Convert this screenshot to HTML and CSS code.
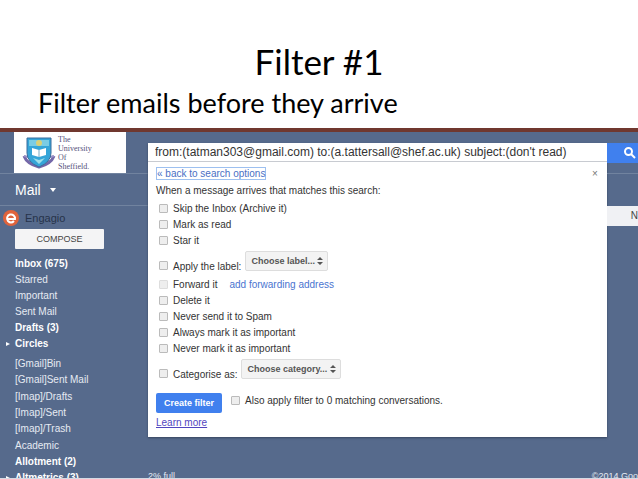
FILE: index.html
```html
<!DOCTYPE html>
<html lang="en">
<head>
    <meta charset="UTF-8">
    <meta name="viewport" content="width=device-width, initial-scale=1.0">
    <title>Filter #1</title>
    <link rel="stylesheet" href="styles.css">
</head>
<body>
    <header class="slide-header">
        <h1>Filter #1</h1>
        <p>Filter emails before they arrive</p>
    </header>
    <div class="mail">
        <aside class="sidebar">
            <div class="logo">
                <svg width="34" height="34" viewBox="0 0 34 34">
                    <path d="M2 20 Q5 28 17 31 Q29 28 32 20" fill="none" stroke="#7468a8" stroke-width="3"/>
                    <path d="M2 20l4 1M32 20l-4 1" stroke="#9a8fc4" stroke-width="2"/>
                    <path d="M5 2h24v15q0 9-12 14Q5 26 5 17z" fill="#35a5d8" stroke="#3a6d9c" stroke-width="1"/>
                    <path d="M7 4h20v6H7z" fill="#79cce4"/>
                    <circle cx="17" cy="7" r="3" fill="#d8d077"/>
                    <path d="M10 12l7 2 7-2v7l-7 2-7-2z" fill="#fff"/>
                    <path d="M17 14v7" stroke="#79a9c4"/>
                    <path d="M11 22l6 2 6-2-6 6z" fill="#9fe0ea"/>
                </svg>
                <span>The<br>University<br>Of<br>Sheffield.</span>
            </div>
            <button class="mail-menu">Mail
                <svg width="6" height="4" viewBox="0 0 6 4"><path d="M0 0h6L3 4z" fill="#fff"/></svg>
            </button>
            <div class="engagio">
                <svg width="16" height="16" viewBox="0 0 16 16">
                    <circle cx="8" cy="8" r="8" fill="#e0633c"/>
                    <path d="M5 9h7a4 4 0 1 0-7 2q3 3 6 0" fill="none" stroke="#fff" stroke-width="2"/>
                </svg>
                <span>Engagio</span>
            </div>
            <button class="compose">COMPOSE</button>
            <nav class="folders">
                <ul>
                    <li><a href="#" class="unread">Inbox (675)</a></li>
                    <li><a href="#">Starred</a></li>
                    <li><a href="#">Important</a></li>
                    <li><a href="#">Sent Mail</a></li>
                    <li><a href="#" class="unread">Drafts (3)</a></li>
                    <li class="parent"><a href="#" class="unread">Circles</a></li>
                </ul>
                <ul class="labels">
                    <li><a href="#">[Gmail]Bin</a></li>
                    <li><a href="#">[Gmail]Sent Mail</a></li>
                </ul>
                <ul>
                    <li><a href="#">[Imap]/Drafts</a></li>
                    <li><a href="#">[Imap]/Sent</a></li>
                    <li><a href="#">[Imap]/Trash</a></li>
                </ul>
                <ul>
                    <li><a href="#">Academic</a></li>
                    <li><a href="#" class="unread">Allotment (2)</a></li>
                    <li class="parent"><a href="#" class="unread">Altmetrics (3)</a></li>
                </ul>
            </nav>
        </aside>
        <main class="content">
            <form class="panel">
                <input class="search" type="text" aria-label="Search mail" value="from:(tatman303@gmail.com) to:(a.tattersall@shef.ac.uk) subject:(don't read)">
                <div class="panel-body">
                    <div class="panel-top">
                        <a href="#" class="back">« back to search options</a>
                        <button type="button" class="close" aria-label="Close">×</button>
                    </div>
                    <p>When a message arrives that matches this search:</p>
                    <div class="option"><input type="checkbox" id="skip"><label for="skip">Skip the Inbox (Archive it)</label></div>
                    <div class="option"><input type="checkbox" id="read"><label for="read">Mark as read</label></div>
                    <div class="option"><input type="checkbox" id="star"><label for="star">Star it</label></div>
                    <div class="option with-select">
                        <input type="checkbox" id="apply"><label for="apply">Apply the label:</label>
                        <span class="select">
                            <select class="label-select" aria-label="Label"><option>Choose label...</option></select>
                            <svg width="6" height="8" viewBox="0 0 6 8"><path d="M0 3l3-3 3 3zM0 5h6L3 8z" fill="#555"/></svg>
                        </span>
                    </div>
                    <div class="option"><input type="checkbox" id="forward" disabled><label for="forward">Forward it</label><a href="#" class="forwarding">add forwarding address</a></div>
                    <div class="option"><input type="checkbox" id="delete"><label for="delete">Delete it</label></div>
                    <div class="option"><input type="checkbox" id="spam"><label for="spam">Never send it to Spam</label></div>
                    <div class="option"><input type="checkbox" id="always"><label for="always">Always mark it as important</label></div>
                    <div class="option"><input type="checkbox" id="never"><label for="never">Never mark it as important</label></div>
                    <div class="option with-select">
                        <input type="checkbox" id="category"><label for="category">Categorise as:</label>
                        <span class="select">
                            <select class="category-select" aria-label="Category"><option>Choose category...</option></select>
                            <svg width="6" height="8" viewBox="0 0 6 8"><path d="M0 3l3-3 3 3zM0 5h6L3 8z" fill="#555"/></svg>
                        </span>
                    </div>
                    <div class="actions">
                        <button type="button" class="create">Create filter</button>
                        <div class="option"><input type="checkbox" id="also"><label for="also">Also apply filter to 0 matching conversations.</label></div>
                    </div>
                    <a href="#" class="learn">Learn more</a>
                </div>
            </form>
            <footer class="mail-footer">
                <span>2% full</span>
                <span>©2014 Goo</span>
            </footer>
        </main>
        <div class="right">
            <button class="search-btn" aria-label="Search">
                <svg width="12" height="12" viewBox="0 0 12 12"><circle cx="4.500" cy="4.500" r="3.500" fill="none" stroke="#fff" stroke-width="2"/><path d="M7 7l4 4" stroke="#fff" stroke-width="2"/></svg>
            </button>
            <div class="rule"></div>
            <div class="toolbar">N</div>
        </div>
    </div>
</body>
</html>
```

FILE: styles.css
```css
* {
    box-sizing: border-box;
}
body {
    margin: 0;
    height: 100vh;
    display: flex;
    flex-direction: column;
    overflow: hidden;
    background-color: #fff;
    font-family: "Liberation Sans", Arial, sans-serif;
    font-size: 10px;
    line-height: 16px;
}
ul, p, h1 {
    margin: 0;
    padding: 0;
}
ul {
    list-style: none;
}
button {
    font-family: inherit;
    font-size: inherit;
    border: none;
    padding: 0;
}
svg {
    display: block;
    flex-shrink: 0;
}

.slide-header {
    padding: 37px 38px 7px;
    font-family: Lato, sans-serif;
    color: #000;
}
.slide-header h1 {
    font-size: 35px;
    line-height: 48px;
    font-weight: normal;
    text-align: center;
}
.slide-header p {
    font-size: 27px;
    line-height: 36px;
}

.mail {
    flex: 1;
    min-height: 0;
    display: flex;
    overflow: hidden;
    background-color: #566a8c;
    border-top: 4px solid #70382f;
    border-bottom: 1px solid #d5dae3;
}

/* left column */
.sidebar {
    width: 148px;
    flex-shrink: 0;
    color: #fff;
}
.logo {
    display: flex;
    align-items: center;
    gap: 2px;
    width: 112px;
    height: 41px;
    margin-left: 14px;
    padding-left: 8px;
    background-color: #fff;
    color: #55507a;
    font-family: "Liberation Serif", serif;
    font-size: 8px;
    line-height: 9px;
}
.mail-menu {
    display: flex;
    align-items: center;
    gap: 9px;
    width: 100%;
    height: 33px;
    padding-left: 15px;
    background: none;
    border-top: 1px solid #71839f;
    border-bottom: 1px solid #71839f;
    color: #fff;
    font-size: 14px;
}
.engagio {
    display: flex;
    align-items: center;
    gap: 6px;
    height: 23px;
    padding-left: 3px;
    color: #26334a;
    font-size: 11px;
}
.compose {
    display: block;
    width: 89px;
    height: 20px;
    margin-left: 15px;
    background-color: #f4f4f5;
    color: #444;
    font-size: 9px;
    border-radius: 1px;
}
.folders {
    display: flex;
    flex-direction: column;
    gap: 1px;
    padding: 7px 0 0 15px;
}
.folders li {
    position: relative;
}
.folders a {
    color: #e6ebf3;
    text-decoration: none;
}
.folders .unread {
    color: #fff;
    font-weight: bold;
}
.folders .labels {
    padding-top: 3px;
}
.parent::before {
    content: "";
    position: absolute;
    left: -9px;
    top: 6px;
    border: 2px solid transparent;
    border-left: 4px solid #fff;
    border-right: 0;
}

/* filter form */
.content {
    flex: 1;
    min-width: 0;
    padding-top: 11px;
}
.panel {
    background-color: #fff;
    color: #333;
    box-shadow: 0 1px 2px #37465f;
}
.search {
    display: block;
    width: 100%;
    height: 19px;
    padding: 0 7px;
    border: none;
    border-bottom: 1px solid #c8cbd1;
    color: #333;
    font-family: inherit;
    font-size: 12px;
}
.panel-body {
    padding: 4px 8px 6px;
}
.panel-top {
    display: flex;
    justify-content: space-between;
    align-items: center;
    height: 15px;
}
.back {
    color: #4a6fc4;
    line-height: 11px;
    border: 1px solid #9dc0f0;
    text-decoration: none;
}
.close {
    width: 8px;
    background: none;
    color: #777;
}
.panel p {
    line-height: 20px;
}
.option {
    display: flex;
    align-items: center;
    padding-left: 3px;
}
.option input {
    appearance: none;
    width: 9px;
    height: 9px;
    margin: 0 5px 2px 0;
    background-color: #eee;
    border: 1px solid #bbb;
    border-radius: 1px;
}
.option input:disabled {
    border-color: #ddd;
}
.with-select {
    height: 28px;
    padding-top: 7px;
}
.select {
    position: relative;
    align-self: flex-start;
    margin: -5px 0 0 4px;
}
.select select {
    appearance: none;
    display: block;
    height: 20px;
    padding: 0 5px;
    background-color: #f3f3f3;
    border: 1px solid #ddd;
    border-radius: 2px;
    color: #555;
    font-family: inherit;
    font-size: 9px;
    font-weight: bold;
}
.label-select {
    width: 83px;
}
.category-select {
    width: 100px;
}
.select svg {
    position: absolute;
    right: 5px;
    top: 6px;
    pointer-events: none;
}
.forwarding {
    margin-left: 12px;
    color: #4a74d0;
    text-decoration: none;
}
.actions {
    display: flex;
    align-items: flex-start;
    gap: 6px;
    margin-top: 8px;
}
.create {
    width: 66px;
    height: 20px;
    background-color: #4080ee;
    border-radius: 2px;
    color: #fff;
    font-size: 9px;
    font-weight: bold;
}
.learn {
    display: block;
    margin-top: 2px;
    color: #5145c0;
}
.mail-footer {
    display: flex;
    justify-content: space-between;
    padding-top: 33px;
    margin-right: -31px;
    color: #e6ebf3;
    font-size: 9px;
    line-height: 12px;
}

/* right edge */
.right {
    width: 31px;
    flex-shrink: 0;
    padding-top: 11px;
}
.search-btn {
    display: flex;
    align-items: center;
    justify-content: flex-end;
    width: 100%;
    height: 20px;
    padding-right: 2px;
    background-color: #4080ee;
}
.rule {
    margin-top: 10px;
    border-top: 1px solid #71839f;
}
.toolbar {
    height: 20px;
    margin-top: 32px;
    background-color: #f0f1f4;
    color: #444;
    line-height: 20px;
    text-align: right;
}
```
